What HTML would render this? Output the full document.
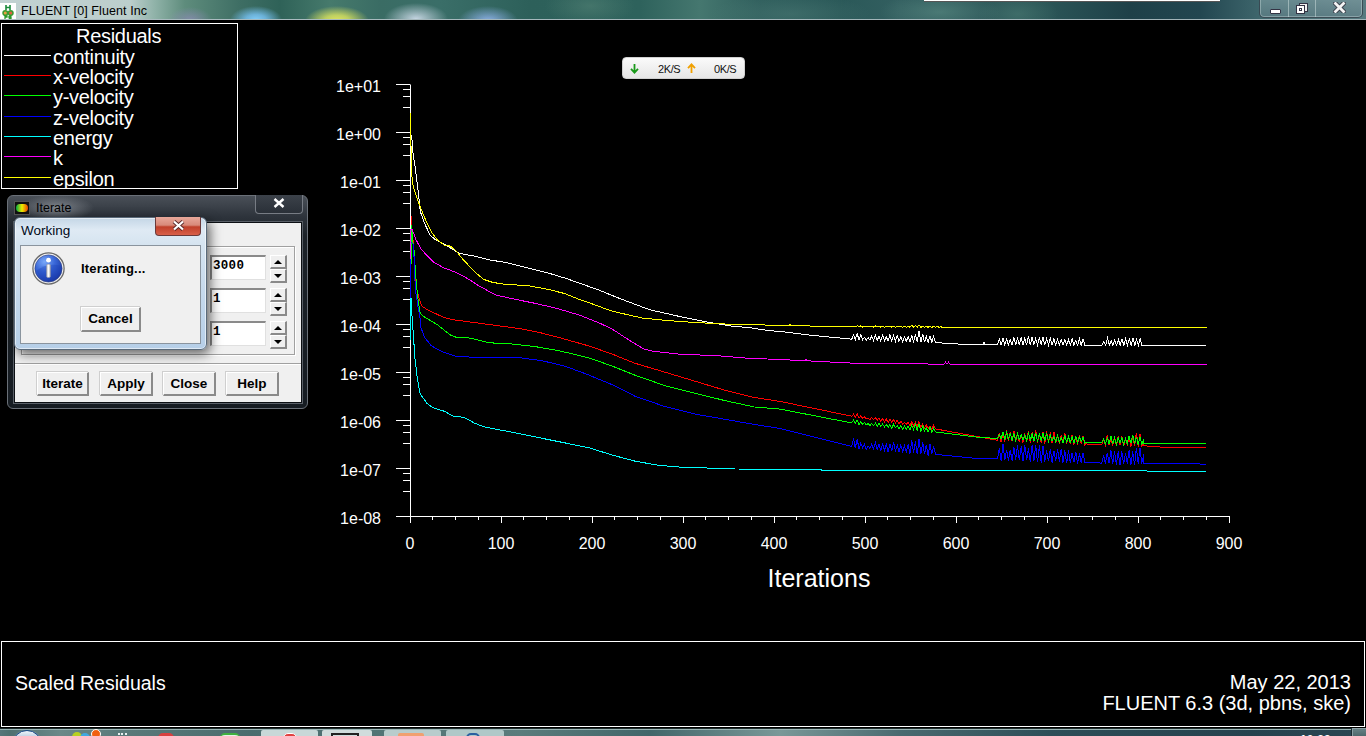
<!DOCTYPE html>
<html><head><meta charset="utf-8">
<style>
*{margin:0;padding:0;box-sizing:border-box}
html,body{width:1366px;height:736px;overflow:hidden;background:#000;font-family:"Liberation Sans",sans-serif;position:relative}
.abs{position:absolute}
/* title bar */
#title{position:absolute;left:0;top:0;width:1366px;height:20px;overflow:hidden;
 background:
  radial-gradient(ellipse 22px 13px at 190px 20px, rgba(140,140,180,.8), rgba(140,140,180,0)),
  radial-gradient(ellipse 26px 14px at 256px 20px, rgba(130,205,250,1) 0, rgba(120,195,245,.8) 40%, rgba(120,195,245,0) 100%),
  radial-gradient(ellipse 32px 15px at 337px 21px, rgba(225,230,95,1) 0, rgba(210,222,95,.85) 40%, rgba(215,225,95,0) 100%),
  radial-gradient(ellipse 32px 16px at 416px 19px, rgba(200,215,228,.98), rgba(200,215,228,0)),
  radial-gradient(ellipse 30px 15px at 488px 21px, rgba(145,180,238,.95), rgba(145,180,238,0)),
  radial-gradient(ellipse 45px 20px at 590px 6px, rgba(95,140,125,.45), rgba(95,140,125,0)),
  radial-gradient(ellipse 60px 20px at 940px 12px, rgba(100,150,140,.5), rgba(100,150,140,0)),
  radial-gradient(ellipse 40px 20px at 1018px 14px, rgba(80,130,120,.5), rgba(80,130,120,0)),
  radial-gradient(ellipse 80px 20px at 790px 14px, rgba(85,130,125,.4), rgba(85,130,125,0)),
  linear-gradient(90deg,#c2d2d2 0,#bccecc 130px,#8fb2a8 155px,#5e8c7c 185px,#3e6e64 240px,#2f6258 280px,#467a6c 330px,#3a6c64 380px,#3a6e68 440px,#2d605a 530px,#2e625c 640px,#45776f 700px,#2f5e5c 760px,#2a5858 840px,#335f60 900px,#2a5456 1050px,#1e4048 1130px,#224650 1200px,#3e666c 1260px,#587a80 1366px);
}
#title .hl{position:absolute;left:0;top:19px;width:1366px;height:2px;background:linear-gradient(90deg,#e0eaee,#c8d8da 50%,#c0d0d4);border-top:1px solid rgba(140,160,165,.6)}
#ticon{position:absolute;left:0;top:3px;width:16px;height:16px;background:#fff}
#ttext{position:absolute;left:21px;top:4px;font-size:12.5px;color:#000;letter-spacing:0.1px}
#topwin{position:absolute;left:924px;top:0;width:296px;height:2px;background:#fff;border-bottom:1px solid #555}
#wbtns{position:absolute;left:1259px;top:-2px;width:104px;height:20px;border:1px solid rgba(40,50,60,.7);border-radius:0 0 5px 5px;
 background:linear-gradient(180deg,rgba(130,160,165,.6),rgba(100,130,138,.6));box-shadow:inset 0 0 0 1px rgba(220,235,235,.35)}
#wbtns .d{position:absolute;top:0;width:1px;height:18px;background:rgba(210,225,225,.5)}
/* legend */
#legend{position:absolute;left:1px;top:23px;width:237px;height:166px;border:1px solid #fff;color:#fff;font-size:20px;letter-spacing:-0.3px;overflow:hidden}
#legend .ttl{position:absolute;left:74px;top:1px;line-height:22px}
.lg{position:absolute;left:0;height:0}
.lg i{position:absolute;left:2px;top:0;width:47px;height:1px}
.lg span{position:absolute;left:51px;top:-9px;line-height:22px;white-space:nowrap}
/* chart labels */
.yl{position:absolute;left:300px;width:81px;text-align:right;color:#fff;font-size:16px;line-height:20px}
.xl{position:absolute;top:534px;width:60px;text-align:center;color:#fff;font-size:16px;line-height:20px}
#xt{position:absolute;left:719px;top:564px;width:200px;text-align:center;color:#fff;font-size:25px;line-height:28px}
/* net widget */
#net{position:absolute;left:622px;top:57px;width:123px;height:22px;border-radius:4px;background:linear-gradient(180deg,#fafafa,#e6e6e6);border:1px solid #d0d0d0;font-size:11px;color:#111}
/* bottom box */
#bbox{position:absolute;left:1px;top:641px;width:1364px;height:86px;border:1px solid #fff;color:#fff;font-size:19.5px}
/* iterate dialog */
#iter{position:absolute;left:7px;top:195px;width:301px;height:214px;border-radius:6px;border:1px solid #6a7078;
 background:radial-gradient(ellipse 38px 13px at 48px 12px, rgba(150,155,162,.75), rgba(150,155,162,0)),linear-gradient(180deg,#4a5058 0,#2e343c 20px,#1c2228 40px,#161c22 100%);}
#iter .cl{position:absolute;left:6px;top:26px;width:288px;height:181px;background:#f0f0f0;border:1px solid #0c1014;box-shadow:0 0 0 1px #5a6068}
#iter .ttl{position:absolute;left:28px;top:5px;font-size:12.5px;color:#000}
#iter .xb{position:absolute;left:247px;top:-1px;width:48px;height:19px;border:1px solid #777c84;border-top:none;border-radius:0 0 4px 4px;background:linear-gradient(180deg,#3c424a,#2a3038)}
.btn{position:absolute;height:24px;background:#efefef;border-top:1px solid #fff;border-left:1px solid #fff;border-right:2px solid #8a8a8a;border-bottom:2px solid #8a8a8a;box-shadow:-1px -1px 0 #cfcfcf;font-weight:bold;font-size:13.5px;text-align:center;line-height:21px;color:#000}
.inp{position:absolute;width:56px;height:25px;background:#fff;border-top:2px solid #8a8a8a;border-left:2px solid #8a8a8a;border-right:1px solid #e0e0e0;border-bottom:1px solid #e0e0e0;font-family:"Liberation Mono",monospace;font-weight:bold;font-size:12.5px;line-height:19px;padding-left:1px;color:#000;letter-spacing:0.3px}
.spin{position:absolute;width:17px;height:14px;background:#efefef;border-top:1px solid #fff;border-left:1px solid #fff;border-right:2px solid #8a8a8a;border-bottom:2px solid #8a8a8a}
.spin:after{content:"";position:absolute;left:3px;top:4px;border-left:4px solid transparent;border-right:4px solid transparent}
.up:after{border-bottom:4px solid #000}
.dn:after{border-top:4px solid #000;top:4px}
/* working dialog */
#work{position:absolute;left:14px;top:217px;width:193px;height:133px;border-radius:6px;border:1px solid #5a6a7a;
 background:linear-gradient(180deg,#c4d6e6 0,#dfeaf4 12px,#d6e4f0 26px,#c4d8ec 60%,#b6cfe8 100%);box-shadow:3px 4px 12px rgba(0,0,0,.6), inset 0 0 0 1px rgba(255,255,255,.55)}
#work .ttl{position:absolute;left:6px;top:5px;font-size:13.5px;color:#000a1a}
#work .xb{position:absolute;left:140px;top:-1px;width:46px;height:19px;border:1px solid #6a3a3a;border-top:none;border-radius:0 0 4px 4px;background:linear-gradient(180deg,#e8a89a 0,#d88a7a 45%,#c0402a 55%,#d8604a 100%)}
#work .pn{position:absolute;left:5px;top:27px;width:181px;height:99px;background:#f0f0f0;border:1px solid #8a949e}
</style></head><body>

<div id="title">
 <div class="hl"></div>
 <div id="ticon"><svg width="16" height="16" viewBox="0 0 16 16">
  <path d="M6 2 V7 M10 2 V7 M6 4.5 H10" stroke="#1a8a3a" stroke-width="1.6"/>
  <circle cx="5.3" cy="10" r="2.3" fill="#e8a040" stroke="#3a9a30" stroke-width="1.5"/>
  <circle cx="10.7" cy="10" r="2.3" fill="#e06040" stroke="#3a9a30" stroke-width="1.5"/>
  <path d="M5 12.5 V16 M5 12.8 H7 V14.2 H5 M9 13 H11.5 M9 13 V14.5 H11 V16 H8.8" stroke="#2a9a2a" stroke-width="1.3" fill="none"/>
 </svg></div>
 <div id="ttext">FLUENT [0] Fluent Inc</div>
 <div id="topwin"></div>
 <div id="wbtns">
  <div class="d" style="left:28px"></div><div class="d" style="left:55px"></div>
  <div class="abs" style="left:10px;top:10px;width:11px;height:5px;background:#fff;border:1px solid #334;border-radius:1px"></div>
  <div class="abs" style="left:39px;top:4px;width:9px;height:9px;background:#f0f0f0;border:1px solid #334"></div>
  <div class="abs" style="left:36px;top:6px;width:9px;height:9px;background:#fff;border:1px solid #334"><div class="abs" style="left:2px;top:2px;width:3px;height:3px;border:1px solid #334"></div></div>
  <svg class="abs" style="left:73px;top:3px" width="13" height="11" viewBox="0 0 13 11"><path d="M2.5 1.5 L10.5 9.5 M10.5 1.5 L2.5 9.5" stroke="#3a3f4a" stroke-width="4.6" stroke-linecap="square"/><path d="M2.5 1.5 L10.5 9.5 M10.5 1.5 L2.5 9.5" stroke="#f4f4f4" stroke-width="2.8" stroke-linecap="square"/></svg>
 </div>
</div>

<div id="legend">
 <div class="ttl">Residuals</div>
 <div class="lg" style="top:31px"><i style="background:#fff"></i><span>continuity</span></div><div class="lg" style="top:51px"><i style="background:#f00"></i><span>x-velocity</span></div><div class="lg" style="top:71px"><i style="background:#0f0"></i><span>y-velocity</span></div><div class="lg" style="top:92px"><i style="background:#00f"></i><span>z-velocity</span></div><div class="lg" style="top:112px"><i style="background:#0ff"></i><span>energy</span></div><div class="lg" style="top:132px"><i style="background:#f0f"></i><span>k</span></div><div class="lg" style="top:153px"><i style="background:#ff0"></i><span>epsilon</span></div>
</div>

<div id="net">
 <svg class="abs" style="left:7px;top:6px" width="9" height="10" viewBox="0 0 9 10"><path d="M4.5 0 V8.5 M1 4.8 L4.5 8.6 L8 4.8" stroke="#1a9a1a" stroke-width="1.8" fill="none"/></svg>
 <div class="abs" style="left:35px;top:5px;letter-spacing:-0.4px;font-size:11px">2K/S</div>
 <svg class="abs" style="left:64px;top:5px" width="9" height="10" viewBox="0 0 9 10"><path d="M4.5 10 V1.5 M1 5.2 L4.5 1.4 L8 5.2" stroke="#f0a000" stroke-width="1.8" fill="none"/></svg>
 <div class="abs" style="left:91px;top:5px;letter-spacing:-0.4px;font-size:11px">0K/S</div>
</div>

<svg class="abs" style="left:0;top:0" width="1366" height="736">
<path d="M410.5 84.5 V516.5 M396 516.5 H1229.5 M396 84.5 H410" stroke="#fff" stroke-width="1" fill="none"/>
<path d="M396 84.5 H410 M403 89.5 H410 M403 96.5 H410 M403 107.5 H410 M396 132.5 H410 M403 137.5 H410 M403 144.5 H410 M403 155.5 H410 M396 180.5 H410 M403 185.5 H410 M403 192.5 H410 M403 203.5 H410 M396 228.5 H410 M403 233.5 H410 M403 240.5 H410 M403 251.5 H410 M396 276.5 H410 M403 281.5 H410 M403 288.5 H410 M403 299.5 H410 M396 324.5 H410 M403 329.5 H410 M403 336.5 H410 M403 347.5 H410 M396 372.5 H410 M403 377.5 H410 M403 384.5 H410 M403 395.5 H410 M396 420.5 H410 M403 425.5 H410 M403 432.5 H410 M403 443.5 H410 M396 468.5 H410 M403 473.5 H410 M403 480.5 H410 M403 491.5 H410 M410.5 516 V523 M432.5 516 V520 M455.5 516 V520 M478.5 516 V520 M501.5 516 V523 M523.5 516 V520 M546.5 516 V520 M569.5 516 V520 M592.5 516 V523 M614.5 516 V520 M637.5 516 V520 M660.5 516 V520 M683.5 516 V523 M705.5 516 V520 M728.5 516 V520 M751.5 516 V520 M774.5 516 V523 M796.5 516 V520 M819.5 516 V520 M842.5 516 V520 M865.5 516 V523 M887.5 516 V520 M910.5 516 V520 M933.5 516 V520 M956.5 516 V523 M978.5 516 V520 M1001.5 516 V520 M1024.5 516 V520 M1047.5 516 V523 M1069.5 516 V520 M1092.5 516 V520 M1115.5 516 V520 M1138.5 516 V523 M1160.5 516 V520 M1183.5 516 V520 M1206.5 516 V520 M1229.5 516 V523" stroke="#fff" stroke-width="1" fill="none"/>
<polyline fill="none" stroke="#ffffff" stroke-width="1" shape-rendering="crispEdges" points="410.5,132.2 412.2,141.2 413.0,152.7 415.4,169.0 417.9,188.6 420.3,211.5 424.4,223.0 430.1,235.2 435.0,239.3 444.0,244.2 459.8,253.5 474.7,256.2 489.7,260.0 504.6,262.2 519.6,266.0 534.5,269.7 549.5,273.4 564.4,277.9 579.4,283.1 600.0,290.5 619.9,298.6 649.8,309.8 679.7,316.5 709.6,322.5 732.0,326.2 749.9,327.7 769.4,330.7 780.0,331.4 809.9,335.1 851.7,339.2 853.5,335.0 855.3,339.6 857.2,333.8 859.0,339.7 860.8,334.7 862.6,339.9 864.4,337.5 866.3,340.0 868.1,337.6 869.9,339.9 871.7,335.9 873.5,340.6 875.4,335.2 877.2,340.3 879.0,336.4 880.8,340.9 882.6,335.1 884.5,340.7 886.3,336.8 888.1,340.9 889.9,334.8 891.7,341.0 893.6,335.3 895.4,341.3 897.2,335.4 899.0,341.4 900.8,336.7 902.7,341.6 904.5,337.0 906.3,341.5 908.1,336.5 909.9,342.0 911.8,335.8 913.6,341.9 915.4,334.5 917.2,342.0 919.0,331.0 920.9,342.4 922.7,333.9 924.5,342.3 926.3,336.2 928.1,342.7 930.0,335.7 931.8,342.5 933.6,336.2 935.5,342.6 959.4,344.1 980.0,344.5 983.0,344.5 984.0,342.0 985.0,344.5 997.5,344.5 999.3,339.0 1001.1,344.8 1003.0,338.2 1004.8,345.0 1006.6,339.3 1008.4,344.7 1010.2,339.8 1012.1,345.0 1013.9,337.4 1015.7,345.1 1017.5,337.6 1019.3,344.8 1021.2,337.2 1023.0,345.0 1024.8,338.2 1026.6,344.8 1028.4,336.0 1030.3,345.2 1032.1,336.7 1033.9,344.8 1035.7,338.5 1037.5,344.9 1039.4,337.3 1041.2,345.0 1043.0,337.0 1044.8,345.1 1046.6,338.9 1048.5,344.9 1050.3,338.5 1052.1,345.1 1053.9,338.5 1055.7,345.2 1057.6,339.7 1059.4,345.2 1061.2,339.7 1063.0,345.3 1064.8,339.6 1066.7,345.3 1068.5,340.0 1070.3,345.2 1072.1,338.6 1073.9,345.1 1075.8,340.4 1077.6,345.2 1079.4,338.7 1081.2,345.3 1083.0,339.1 1084.9,345.3 1086.0,345.0 1102.0,345.0 1103.8,341.8 1105.6,345.5 1107.5,338.4 1109.3,345.4 1111.1,340.6 1112.9,345.3 1114.7,340.3 1116.6,345.3 1118.4,339.6 1120.2,345.3 1122.0,338.8 1123.8,345.4 1125.7,338.4 1127.5,345.4 1129.3,338.5 1131.1,345.6 1132.9,337.8 1134.8,345.4 1136.6,339.3 1138.4,345.6 1140.2,338.8 1142.0,345.9 1143.5,345.4 1206.0,345.4"/>
<polyline fill="none" stroke="#ff0000" stroke-width="1" shape-rendering="crispEdges" points="410.5,286.6 411.5,215.6 412.5,242.0 413.5,241.0 414.6,260.5 415.4,275.2 417.0,290.0 419.5,299.7 422.0,306.2 426.9,309.5 444.0,317.6 452.3,319.6 474.7,322.6 497.2,325.6 519.6,328.6 542.0,333.1 564.4,339.0 590.0,346.3 612.4,354.2 634.8,363.2 664.7,372.1 694.6,381.1 724.5,390.1 754.4,397.5 780.0,401.4 851.7,416.2 853.5,414.2 855.3,417.3 857.2,413.6 859.0,418.2 860.8,415.7 862.6,418.4 864.4,416.8 866.3,418.7 868.1,417.8 869.9,419.8 871.7,417.3 873.5,419.6 875.4,417.7 877.2,420.3 879.0,417.7 880.8,421.4 882.6,418.7 884.5,421.9 886.3,419.1 888.1,422.5 889.9,419.1 891.7,422.6 893.6,419.5 895.4,423.1 897.2,420.2 899.0,424.0 900.8,421.2 902.7,424.4 904.5,422.3 906.3,424.6 908.1,422.1 909.9,425.8 911.8,421.7 913.6,425.8 915.4,421.9 917.2,427.0 919.0,421.6 920.9,427.2 922.7,424.1 924.5,428.2 926.3,425.1 928.1,428.5 930.0,425.8 931.8,429.1 933.6,425.2 935.5,428.9 980.0,437.1 997.5,440.3 999.3,433.2 1001.1,441.9 1003.0,433.0 1004.8,441.8 1006.6,430.4 1008.4,441.4 1010.2,432.6 1012.1,441.1 1013.9,430.7 1015.7,441.1 1017.5,432.5 1019.3,442.2 1021.2,433.9 1023.0,442.5 1024.8,433.6 1026.6,442.1 1028.4,430.9 1030.3,443.1 1032.1,432.2 1033.9,442.0 1035.7,429.7 1037.5,443.1 1039.4,432.9 1041.2,443.4 1043.0,432.1 1044.8,443.5 1046.6,431.5 1048.5,442.9 1050.3,432.4 1052.1,443.3 1053.9,431.8 1055.7,442.8 1057.6,436.1 1059.4,443.8 1061.2,435.3 1063.0,443.2 1064.8,433.1 1066.7,443.5 1068.5,436.2 1070.3,444.2 1072.1,435.0 1073.9,444.9 1075.8,436.4 1077.6,444.8 1079.4,434.6 1081.2,443.7 1083.0,436.2 1084.9,445.1 1085.3,443.9 1101.8,444.8 1103.6,439.7 1105.4,445.1 1107.3,435.1 1109.1,445.1 1110.9,438.3 1112.7,445.8 1114.5,436.8 1116.4,445.9 1118.2,435.9 1120.0,445.4 1121.8,436.0 1123.6,446.3 1125.5,438.6 1127.3,445.4 1129.1,436.8 1130.9,446.6 1132.7,435.8 1134.6,446.4 1136.4,432.6 1138.2,446.8 1140.0,433.6 1141.8,446.6 1143.7,439.0 1143.9,445.8 1162.2,447.2 1206.0,447.2"/>
<polyline fill="none" stroke="#00ff00" stroke-width="1" shape-rendering="crispEdges" points="410.5,290.0 411.8,224.6 412.5,240.0 414.0,250.0 416.2,281.7 418.4,303.0 420.3,313.6 425.2,317.6 436.7,324.2 450.8,335.3 456.8,337.5 467.3,337.5 489.7,342.8 512.1,344.0 534.5,346.5 557.0,350.3 579.4,355.5 590.0,358.2 612.4,366.2 634.8,375.1 664.7,385.6 694.6,393.1 724.5,400.5 754.4,407.0 780.0,409.1 851.7,422.9 853.5,419.9 855.3,423.7 857.2,420.1 859.0,424.6 860.8,421.8 862.6,424.2 864.4,422.4 866.3,424.9 868.1,423.4 869.9,425.6 871.7,423.5 873.5,425.6 875.4,423.2 877.2,426.2 879.0,423.3 880.8,426.4 882.6,424.0 884.5,427.1 886.3,424.4 888.1,427.4 889.9,424.5 891.7,428.0 893.6,424.4 895.4,427.6 897.2,425.5 899.0,429.0 900.8,425.5 902.7,428.9 904.5,426.1 906.3,429.1 908.1,426.5 909.9,429.9 911.8,425.1 913.6,429.6 915.4,424.0 917.2,430.4 919.0,423.8 920.9,431.3 922.7,425.6 924.5,431.1 926.3,427.8 928.1,432.0 930.0,427.4 931.8,432.4 933.6,428.4 935.5,431.9 980.0,437.5 997.5,438.4 999.3,434.6 1001.1,439.1 1003.0,431.7 1004.8,440.0 1006.6,433.1 1008.4,438.9 1010.2,433.6 1012.1,440.2 1013.9,433.9 1015.7,440.5 1017.5,433.8 1019.3,439.5 1021.2,434.5 1023.0,440.0 1024.8,435.0 1026.6,440.3 1028.4,433.3 1030.3,439.9 1032.1,433.7 1033.9,441.1 1035.7,432.9 1037.5,441.4 1039.4,433.6 1041.2,440.5 1043.0,433.3 1044.8,440.7 1046.6,433.6 1048.5,441.1 1050.3,435.3 1052.1,441.0 1053.9,436.3 1055.7,441.9 1057.6,435.3 1059.4,442.0 1061.2,437.2 1063.0,442.6 1064.8,435.8 1066.7,442.2 1068.5,437.0 1070.3,442.3 1072.1,436.7 1073.9,442.9 1075.8,436.7 1077.6,442.2 1079.4,436.8 1081.2,441.9 1083.0,436.9 1084.9,443.2 1085.3,442.1 1101.8,442.5 1103.6,439.2 1105.4,443.6 1107.3,437.9 1109.1,444.1 1110.9,436.0 1112.7,444.2 1114.5,438.1 1116.4,444.3 1118.2,437.9 1120.0,443.0 1121.8,437.5 1123.6,444.0 1125.5,438.5 1127.3,443.6 1129.1,435.7 1130.9,443.3 1132.7,434.9 1134.6,443.4 1136.4,436.8 1138.2,444.4 1140.0,437.3 1141.8,444.4 1143.7,438.9 1143.9,443.4 1206.0,443.4"/>
<polyline fill="none" stroke="#0000ff" stroke-width="1" shape-rendering="crispEdges" points="410.5,335.0 411.0,242.5 413.5,244.2 415.4,290.0 417.9,306.2 420.3,319.3 421.0,327.8 424.7,337.5 431.4,345.8 441.9,351.7 455.3,356.2 468.8,357.0 495.7,357.0 519.6,357.7 542.0,360.7 564.4,366.0 586.8,374.2 612.4,384.8 634.8,396.1 664.7,406.5 694.6,414.0 724.5,419.2 754.4,424.5 780.0,428.4 851.7,446.5 853.5,438.5 855.3,448.0 857.2,438.9 859.0,449.1 860.8,443.1 862.6,447.7 864.4,444.2 866.3,449.4 868.1,445.9 869.9,448.6 871.7,444.1 873.5,448.7 875.4,442.6 877.2,449.6 879.0,444.1 880.8,451.1 882.6,443.3 884.5,450.5 886.3,443.5 888.1,451.9 889.9,443.7 891.7,451.0 893.6,442.4 895.4,450.8 897.2,445.3 899.0,452.2 900.8,445.2 902.7,451.5 904.5,445.7 906.3,452.4 908.1,444.5 909.9,453.8 911.8,440.5 913.6,452.9 915.4,441.5 917.2,454.4 919.0,439.3 920.9,454.0 922.7,442.3 924.5,454.3 926.3,444.7 928.1,455.5 930.0,444.5 931.8,454.3 933.6,446.5 935.5,454.3 980.0,458.8 997.5,458.9 999.3,447.9 1001.1,460.9 1003.0,444.2 1004.8,459.8 1006.6,449.6 1008.4,460.8 1010.2,449.7 1012.1,460.8 1013.9,446.9 1015.7,459.8 1017.5,445.4 1019.3,459.9 1021.2,446.3 1023.0,461.2 1024.8,445.2 1026.6,460.3 1028.4,448.3 1030.3,461.5 1032.1,445.4 1033.9,460.9 1035.7,445.5 1037.5,462.4 1039.4,445.0 1041.2,462.5 1043.0,445.8 1044.8,461.5 1046.6,450.4 1048.5,461.3 1050.3,448.6 1052.1,462.5 1053.9,450.6 1055.7,461.4 1057.6,448.8 1059.4,461.7 1061.2,448.9 1063.0,462.6 1064.8,450.2 1066.7,463.4 1068.5,449.9 1070.3,462.9 1072.1,452.8 1073.9,462.4 1075.8,451.9 1077.6,463.7 1079.4,453.4 1081.2,462.5 1083.0,452.7 1084.9,462.2 1085.3,462.2 1101.8,463.1 1103.6,455.2 1105.4,463.7 1107.3,452.6 1109.1,463.1 1110.9,450.4 1112.7,464.0 1114.5,451.1 1116.4,464.7 1118.2,451.5 1120.0,465.0 1121.8,451.2 1123.6,463.9 1125.5,453.0 1127.3,463.5 1129.1,450.3 1130.9,464.9 1132.7,451.5 1134.6,464.6 1136.4,447.9 1138.2,463.6 1140.0,447.9 1141.8,463.5 1143.7,454.3 1143.9,463.1 1206.0,464.1"/>
<polyline fill="none" stroke="#00ffff" stroke-width="1" shape-rendering="crispEdges" points="410.5,340.0 411.0,298.0 412.0,315.9 413.5,336.8 414.9,357.7 417.2,377.2 419.4,390.0 420.2,394.2 426.9,403.2 432.9,407.7 444.8,411.4 452.3,415.9 464.3,417.4 474.7,423.3 485.2,427.1 504.6,430.8 527.1,435.3 549.5,439.8 571.9,444.3 590.0,448.1 612.4,455.1 634.8,461.1 657.3,465.1 679.7,467.1 709.6,468.1 735.0,469.0 821.0,469.3 822.0,470.4 1145.7,470.1 1147.5,471.4 1206.0,471.0"/>
<polyline fill="none" stroke="#ff00ff" stroke-width="1" shape-rendering="crispEdges" points="410.5,258.9 410.5,229.5 412.2,229.5 416.2,240.1 421.1,249.1 428.5,257.2 433.4,262.1 444.0,267.9 449.3,269.7 459.8,274.2 470.3,280.1 477.7,285.2 495.7,295.0 512.1,298.7 534.5,303.2 557.0,308.4 579.4,315.1 600.0,323.3 612.4,329.2 628.9,340.0 643.8,349.0 652.8,351.2 679.7,354.2 717.1,355.7 747.0,358.2 780.0,359.5 805.0,360.8 806.0,359.0 807.0,360.8 851.7,363.1 944.0,364.2 945.5,362.3 947.0,364.2 948.5,362.3 950.0,364.3 980.0,364.6 1207.0,364.4"/>
<polyline fill="none" stroke="#ffff00" stroke-width="1" shape-rendering="crispEdges" points="410.5,112.6 410.5,132.0 410.9,141.2 411.7,173.9 413.0,185.3 415.4,193.5 420.3,207.0 424.4,217.2 430.9,231.1 436.7,239.3 444.0,245.0 447.8,245.3 450.8,246.5 456.8,251.7 462.8,259.2 474.7,271.9 483.7,279.4 492.7,282.4 504.6,284.3 528.5,285.7 549.5,289.7 564.4,293.5 579.4,299.4 590.0,303.1 612.4,311.3 642.3,318.0 664.7,320.3 694.6,322.5 724.5,324.0 754.4,324.7 780.0,325.4 789.0,325.6 790.0,323.8 791.0,325.6 851.7,326.9 853.5,326.1 855.3,326.9 857.2,325.7 859.0,326.9 860.8,325.9 862.6,327.0 864.4,326.5 866.3,327.0 868.1,326.5 869.9,327.0 871.7,326.1 873.5,327.0 875.4,326.0 877.2,327.1 879.0,326.2 880.8,327.1 882.6,326.1 884.5,327.1 886.3,326.3 888.1,327.1 889.9,326.0 891.7,327.2 893.6,326.1 895.4,327.2 897.2,326.2 899.0,327.2 900.8,326.1 902.7,327.2 904.5,326.3 906.3,327.3 908.1,326.2 909.9,327.3 911.8,325.5 913.6,327.3 915.4,325.4 917.2,327.3 919.0,324.9 920.9,327.4 922.7,326.2 924.5,327.4 926.3,326.3 928.1,327.4 930.0,325.9 931.8,327.4 933.6,326.2 935.4,327.5 937.2,326.1 939.1,327.5 940.9,326.2 942.0,327.5 980.0,327.7 1207.0,327.5"/>
</svg>
<div class="yl" style="top:77px">1e+01</div><div class="yl" style="top:125px">1e+00</div><div class="yl" style="top:173px">1e-01</div><div class="yl" style="top:221px">1e-02</div><div class="yl" style="top:269px">1e-03</div><div class="yl" style="top:317px">1e-04</div><div class="yl" style="top:365px">1e-05</div><div class="yl" style="top:413px">1e-06</div><div class="yl" style="top:461px">1e-07</div><div class="yl" style="top:509px">1e-08</div>
<div class="xl" style="left:380px">0</div><div class="xl" style="left:471px">100</div><div class="xl" style="left:562px">200</div><div class="xl" style="left:653px">300</div><div class="xl" style="left:744px">400</div><div class="xl" style="left:835px">500</div><div class="xl" style="left:926px">600</div><div class="xl" style="left:1017px">700</div><div class="xl" style="left:1108px">800</div><div class="xl" style="left:1199px">900</div>
<div id="xt">Iterations</div>

<div id="bbox">
 <div class="abs" style="left:13px;top:29px;line-height:24px">Scaled Residuals</div>
 <div class="abs" style="right:13px;top:30px;line-height:21px;text-align:right;font-size:20px">May 22, 2013<br>FLUENT 6.3 (3d, pbns, ske)</div>
</div>

<div id="iter">
 <div class="abs" style="left:6px;top:5px;width:16px;height:14px;background:#111;border:1px solid #555"><div class="abs" style="left:1px;top:2px;width:12px;height:8px;border-radius:4px;background:linear-gradient(90deg,#0a4 0,#ee0 50%,#e40 100%)"></div></div>
 <div class="ttl">Iterate</div>
 <div class="xb"><svg class="abs" style="left:17px;top:3px" width="12" height="10" viewBox="0 0 12 10"><path d="M1.5 1 L10.5 9 M10.5 1 L1.5 9" stroke="#fff" stroke-width="2.4"/></svg></div>
 <div class="cl">
  <div class="abs" style="left:6px;top:23px;width:274px;height:109px;border:1px solid #a0a0a0;box-shadow:inset 1px 1px 0 #fff,1px 1px 0 #fff"></div>
  <div class="inp" style="left:195px;top:32px">3000</div>
  <div class="inp" style="left:195px;top:65px">1</div>
  <div class="inp" style="left:195px;top:98px">1</div>
  <div class="spin up" style="left:255px;top:32px"></div><div class="spin dn" style="left:255px;top:46px"></div>
  <div class="spin up" style="left:255px;top:65px"></div><div class="spin dn" style="left:255px;top:79px"></div>
  <div class="spin up" style="left:255px;top:98px"></div><div class="spin dn" style="left:255px;top:112px"></div>
  <div class="abs" style="left:0;top:140px;width:286px;height:2px;border-top:1px solid #a0a0a0;border-bottom:1px solid #fff"></div>
  <div class="btn" style="left:22px;top:149px;width:52px">Iterate</div>
  <div class="btn" style="left:85px;top:149px;width:53px">Apply</div>
  <div class="btn" style="left:148px;top:149px;width:53px">Close</div>
  <div class="btn" style="left:211px;top:149px;width:53px">Help</div>
 </div>
</div>

<div id="work">
 <div class="ttl">Working</div>
 <div class="xb"><svg class="abs" style="left:16px;top:3px" width="13" height="11" viewBox="0 0 13 11"><path d="M2 1.5 L11 9.5 M11 1.5 L2 9.5" stroke="#5a2a2a" stroke-width="4"/><path d="M2 1.5 L11 9.5 M11 1.5 L2 9.5" stroke="#fff" stroke-width="2.2"/></svg></div>
 <div class="pn">
  <svg class="abs" style="left:11px;top:6px" width="33" height="33" viewBox="0 0 33 33">
   <defs><radialGradient id="ig" cx="35%" cy="25%" r="75%"><stop offset="0" stop-color="#7aa8f8"/><stop offset=".5" stop-color="#3a68d8"/><stop offset="1" stop-color="#1a3aa8"/></radialGradient>
   <linearGradient id="il" x1="0" x2="1"><stop offset="0" stop-color="#c8c8c8"/><stop offset=".5" stop-color="#fafafa"/><stop offset="1" stop-color="#b8b8b8"/></linearGradient></defs>
   <circle cx="16.5" cy="16.5" r="15.6" fill="#f0f0f0" stroke="#6a6a6a" stroke-width="1.3"/>
   <circle cx="16.5" cy="16.5" r="13.6" fill="url(#ig)" stroke="#2a3a80" stroke-width=".6"/>
   <path d="M4 19 Q16 10 29 14 L29 20 Q20 29 10 27 Z" fill="#1a40b8" opacity=".35"/>
   <circle cx="16.5" cy="8.2" r="2.4" fill="#fff"/>
   <rect x="14.6" y="12.2" width="3.8" height="13.2" rx="1.2" fill="url(#il)" stroke="#9a9aa0" stroke-width=".5"/>
  </svg>
  <div class="abs" style="left:60px;top:15px;font-weight:bold;font-size:13px;color:#000;letter-spacing:0.2px">Iterating...</div>
  <div class="btn" style="left:60px;top:61px;width:60px;height:25px;line-height:22px">Cancel</div>
 </div>
</div>

<div id="taskbar" class="abs" style="left:0;top:728px;width:1366px;height:8px;background:linear-gradient(90deg,#56767a,#4e7070 10px,#6a8888 60px,#5a7a7a 120px,#4a6c6e 250px,#5a7c7c 520px,#42666a 650px,#7a9898 780px,#4a6a70 900px,#2e4e58 1050px,#26424e 1250px,#2a4652 1366px);border-top:1px solid #1a2a2a;box-shadow:inset 0 1px 0 #9ab4b4">
 <div class="abs" style="left:12px;top:1px;width:30px;height:30px;border-radius:15px;background:linear-gradient(180deg,#f0f6fa,#a8c0d8 30%,#7a98b8);border:1px solid #1a4a8a;box-shadow:0 0 1px #8ab"></div>
 <div class="abs" style="left:118px;top:4px;width:9px;height:2px;background:repeating-linear-gradient(90deg,#e8f0f0 0 2px,transparent 2px 3.5px)"></div>
 <div class="abs" style="left:72px;top:3px;width:10px;height:10px;border-radius:5px;background:#b8d020"></div>
 <div class="abs" style="left:80px;top:4px;width:10px;height:10px;border-radius:5px;background:#40a8e0"></div>
 <div class="abs" style="left:91px;top:0px;width:10px;height:10px;border-radius:5px;background:#f06010;border:1px solid #fff"></div>
 <div class="abs" style="left:158px;top:4px;width:16px;height:10px;border-radius:8px;background:#d84040"></div>
 <div class="abs" style="left:220px;top:4px;width:20px;height:10px;border-radius:10px;background:#e8f0e8;border-top:2px solid #40b040"></div>
 <div class="abs" style="left:261px;top:1px;width:57px;height:9px;border-radius:2px;background:#c8d8d8"><div class="abs" style="left:22px;top:3px;width:14px;height:10px;border-radius:7px;background:#e04040;border:1px solid #fff"></div></div>
 <div class="abs" style="left:322px;top:1px;width:50px;height:9px;border-radius:2px;background:#d0dcdc"><div class="abs" style="left:9px;top:3px;width:28px;height:8px;border:2px solid #222"></div></div>
 <div class="abs" style="left:384px;top:1px;width:57px;height:9px;border-radius:2px;background:#b8cccc"><div class="abs" style="left:14px;top:3px;width:26px;height:8px;border-radius:2px;background:#f0a070"></div></div>
 <div class="abs" style="left:446px;top:1px;width:58px;height:9px;border-radius:2px;background:#b0c8c8"><div class="abs" style="left:20px;top:3px;width:14px;height:10px;border-radius:7px;border:2px solid #2a60a0"></div></div>
 <div class="abs" style="left:1300px;top:5px;font-size:12px;color:#fff;font-weight:bold;line-height:12px">10:39</div>
 <div class="abs" style="left:1351px;top:-1px;width:15px;height:9px;background:linear-gradient(180deg,#6a8488,#4a6468);border-left:1px solid #1a2a30;box-shadow:inset 1px 1px 0 #8aa0a4"></div>
</div>

</body></html>
